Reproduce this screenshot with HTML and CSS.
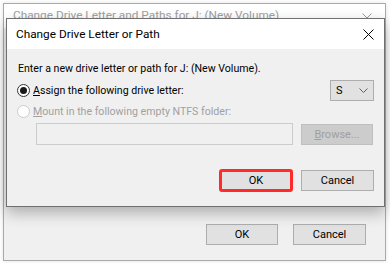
FILE: index.html
```html
<html>
    <head>
        <link rel="stylesheet" href="styles.css">
        <title>Change Drive Letter or Path</title>
    </head>
    <body>
        <!-- the window behind, inactive -->
        <div class="window backWindow">
            <div class="titleBar inactive">
                <span class="titleText">Change Drive Letter and Paths for J: (New Volume)</span>
                <svg class="closeIcon" width="10" height="10" viewBox="0 0 10 10">
                    <path d="M0.5 0.5 L9.5 9.5 M9.5 0.5 L0.5 9.5" stroke="#9a9a9a" stroke-width="1" fill="none"/>
                </svg>
            </div>
            <div class="windowBody backBody">
                <div class="buttonRow">
                    <button type="button" class="winButton okBack">OK</button>
                    <button type="button" class="winButton">Cancel</button>
                </div>
            </div>
        </div>

        <!-- the dialog on top -->
        <div class="window dialog">
            <div class="titleBar">
                <span class="titleText">Change Drive Letter or Path</span>
                <svg class="closeIcon" width="11" height="11" viewBox="0 0 11 11">
                    <path d="M0.5 0.5 L10.5 10.5 M10.5 0.5 L0.5 10.5" stroke="#000" stroke-width="1" fill="none"/>
                </svg>
            </div>
            <div class="windowBody dialogBody">
                <p class="intro">Enter a new drive letter or path for J: (New Volume).</p>
                <div class="optionRow">
                    <span class="radio checked"></span>
                    <span class="label"><u>A</u>ssign the following drive letter:</span>
                    <div class="combo">
                        <span>S</span>
                        <svg width="9" height="5" viewBox="0 0 9 5">
                            <path d="M0.5 0.5 L4.5 4.5 L8.5 0.5" stroke="#606060" stroke-width="1" fill="none"/>
                        </svg>
                    </div>
                </div>
                <div class="optionRow mountRow disabled">
                    <span class="radio"></span>
                    <span class="label"><u>M</u>ount in the following empty NTFS folder:</span>
                </div>
                <div class="folderRow">
                    <div class="textBox"></div>
                    <button type="button" class="winButton browse"><u>B</u>rowse...</button>
                </div>
                <div class="buttonRow dialogButtons">
                    <button type="button" class="winButton highlighted">OK</button>
                    <button type="button" class="winButton">Cancel</button>
                </div>
            </div>
        </div>
    </body>
</html>
```

FILE: styles.css
```css
body        {margin: 0;
             width: 390px;
             height: 263px;
             background-color: white;
             font-family: Roboto, "Noto Sans", sans-serif;
             font-size: 10.6px;
             color: black;
             position: relative;
             overflow: hidden;}

.window     {position: absolute;
             box-sizing: border-box;
             display: flex;
             flex-direction: column;}

.backWindow {left: 3px;
             top: 3px;
             width: 383px;
             height: 258px;
             border: 1px solid #aaaaaa;
             box-shadow: 0 0 4px rgba(0, 0, 0, 0.12);}

.dialog     {left: 6px;
             top: 18px;
             width: 379px;
             height: 189px;
             border: 1px solid #707070;
             box-shadow: 0 6px 14px rgba(0, 0, 0, 0.28);}

.titleBar   {height: 30px;
             flex: none;
             background-color: white;
             display: flex;
             align-items: center;
             justify-content: space-between;
             padding: 0 10px 0 9px;}
.titleBar.inactive {color: #a0a0a0;
                    height: 24px;
                    align-items: flex-start;
                    padding-top: 4px;
                    padding-right: 13px;
                    box-sizing: border-box;}
.titleText  {font-size: 11.8px;}
.inactive .closeIcon {margin-top: 5px;}

.windowBody {flex: 1;
             background-color: #f0f0f0;
             display: flex;
             flex-direction: column;}

.backBody   {justify-content: flex-end;
             padding: 0 19px 15px 0;}

.dialogBody {padding: 12px 10px 0 10px;}

.intro      {margin: 0 0 0 1px;
             line-height: 15px;}

.optionRow  {display: flex;
             align-items: center;
             margin-top: 4px;
             height: 21px;}
.mountRow   {margin-top: 3px;
             height: 15px;}

.radio      {width: 13px;
             height: 13px;
             box-sizing: border-box;
             border-radius: 50%;
             border: 1px solid #333333;
             background-color: white;
             margin-right: 3px;
             position: relative;}
.radio.checked::after {content: "";
                       position: absolute;
                       left: 2px;
                       top: 2px;
                       width: 7px;
                       height: 7px;
                       border-radius: 50%;
                       background-color: #1a1a1a;}
.disabled        {color: #a0a0a0;}
.disabled .radio {border-color: #cccccc;}

.combo      {margin-left: auto;
             width: 44px;
             height: 21px;
             box-sizing: border-box;
             border: 1px solid #adadad;
             background-color: #e1e1e1;
             display: flex;
             align-items: center;
             justify-content: space-between;
             padding: 0 5px 0 5px;
             font-size: 11px;}

.folderRow  {display: flex;
             gap: 8px;
             margin-top: 4px;
             padding-left: 19px;
             align-items: flex-start;}
.textBox    {width: 257px;
             height: 22px;
             box-sizing: border-box;
             border: 1px solid #cccccc;
             background-color: #f0f0f0;}

.winButton  {width: 73px;
             height: 21px;
             box-sizing: border-box;
             border: 1px solid #adadad;
             background-color: #e1e1e1;
             font-family: Roboto, "Noto Sans", sans-serif;
             font-size: 11px;
             color: black;
             padding: 0;}
.browse     {width: 72px;
             margin-top: 1px;
             background-color: #cccccc;
             border-color: #bfbfbf;
             color: #a0a0a0;}

.buttonRow  {display: flex;
             justify-content: flex-end;
             align-items: center;
             gap: 15px;}
.okBack     {width: 72px;}

.dialogButtons {margin-top: 24px;
                gap: 8px;}
.highlighted {width: 74px;
              height: 23px;
              border: 3px solid #ff2a2a;
              border-radius: 3px;}
```
